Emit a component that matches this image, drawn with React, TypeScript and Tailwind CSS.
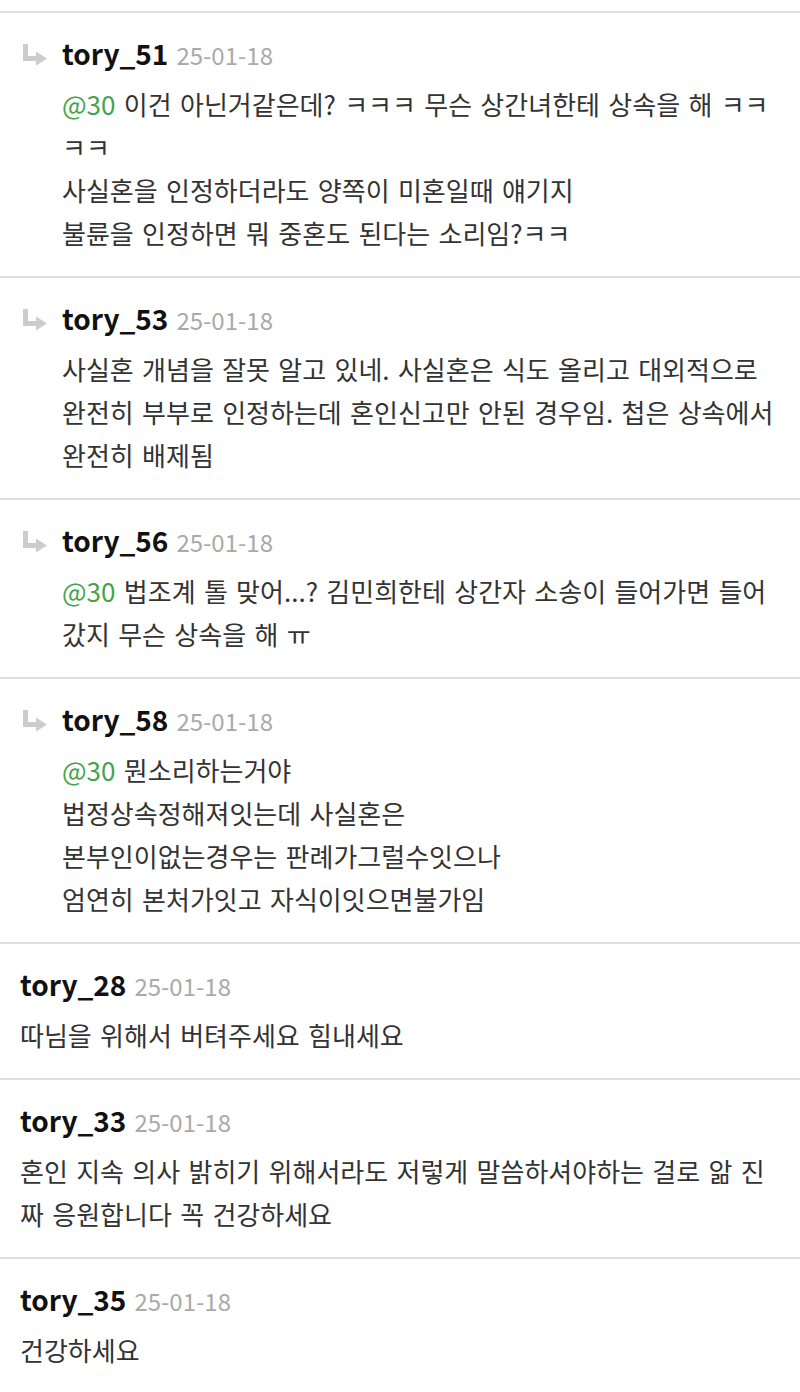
import React from 'react';

interface Comment {
  id: number;
  name: string;
  date: string;
  reply: boolean;
  mention?: string;
  lines: string[];
}

const comments: Comment[] = [
  {
    id: 51,
    name: 'tory_51',
    date: '25-01-18',
    reply: true,
    mention: '@30',
    lines: [
      ' 이건 아닌거같은데? ㅋㅋㅋ 무슨 상간녀한테 상속을 해 ㅋㅋ',
      'ㅋㅋ',
      '사실혼을 인정하더라도 양쪽이 미혼일때 얘기지',
      '불륜을 인정하면 뭐 중혼도 된다는 소리임?ㅋㅋ',
    ],
  },
  {
    id: 53,
    name: 'tory_53',
    date: '25-01-18',
    reply: true,
    lines: [
      '사실혼 개념을 잘못 알고 있네. 사실혼은 식도 올리고 대외적으로',
      '완전히 부부로 인정하는데 혼인신고만 안된 경우임. 첩은 상속에서',
      '완전히 배제됨',
    ],
  },
  {
    id: 56,
    name: 'tory_56',
    date: '25-01-18',
    reply: true,
    mention: '@30',
    lines: [' 법조계 톨 맞어...? 김민희한테 상간자 소송이 들어가면 들어', '갔지 무슨 상속을 해 ㅠ'],
  },
  {
    id: 58,
    name: 'tory_58',
    date: '25-01-18',
    reply: true,
    mention: '@30',
    lines: [
      ' 뭔소리하는거야',
      '법정상속정해져잇는데 사실혼은',
      '본부인이없는경우는 판례가그럴수잇으나',
      '엄연히 본처가잇고 자식이잇으면불가임',
    ],
  },
  {
    id: 28,
    name: 'tory_28',
    date: '25-01-18',
    reply: false,
    lines: ['따님을 위해서 버텨주세요 힘내세요'],
  },
  {
    id: 33,
    name: 'tory_33',
    date: '25-01-18',
    reply: false,
    lines: [
      '혼인 지속 의사 밝히기 위해서라도 저렇게 말씀하셔야하는 걸로 앎 진',
      '짜 응원합니다 꼭 건강하세요',
    ],
  },
  {
    id: 35,
    name: 'tory_35',
    date: '25-01-18',
    reply: false,
    lines: ['건강하세요'],
  },
];

const ReplyIcon = () => (
  <svg width="26" height="26" viewBox="0 0 26 26" aria-hidden="true">
    <path d="M3.5 1 V15.5 H15" fill="none" stroke="#cccccc" strokeWidth="5" />
    <path d="M14 8.5 L25 15.5 L14 22.5 Z" fill="#cccccc" />
  </svg>
);

const CommentRow: React.FC<{ comment: Comment }> = ({ comment }) => (
  <div className={`flex border-b-2 border-[#dedede] pt-4 pb-[22px] pr-4 ${comment.reply ? 'pl-[22px]' : 'pl-5'}`}>
    {comment.reply && (
      <div className="w-10 flex-shrink-0 pt-[14px]">
        <ReplyIcon />
      </div>
    )}
    <div className="flex-1">
      {/* Header */}
      <div className="flex items-baseline gap-2 h-[48px] leading-[48px]">
        <span className="text-[28px] font-bold text-[#111111]">{comment.name}</span>
        <span className="text-[24px] text-[#aaaaaa]">{comment.date}</span>
      </div>

      {/* Body */}
      <div className="mt-[5px] text-[26px] leading-[43px] text-[#333333] [word-spacing:2.5px]">
        {comment.lines.map((line, i) => (
          <div key={i} className="whitespace-pre">
            {i === 0 && comment.mention && <span className="text-[#45a34b]">{comment.mention}</span>}
            {line}
          </div>
        ))}
      </div>
    </div>
  </div>
);

export default function App() {
  return (
    <div
      className="w-[800px] h-[1392px] overflow-hidden bg-white pt-[11px]"
      style={{ fontFamily: '"Noto Sans CJK KR", "Noto Sans", sans-serif' }}
    >
      <div className="border-t-2 border-[#dedede]">
        {comments.map((c) => (
          <CommentRow key={c.id} comment={c} />
        ))}
      </div>
    </div>
  );
}
